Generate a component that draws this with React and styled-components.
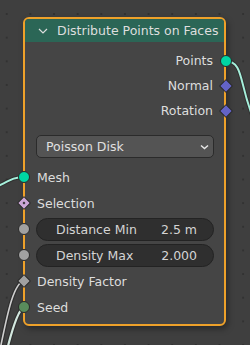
import React from 'react';
import styled, { createGlobalStyle } from 'styled-components';

const GlobalStyle = createGlobalStyle`
  html, body {
    margin: 0;
    padding: 0;
    background: #3f3f3f;
  }
`;

// socket kinds found on the node
const socketColors = {
  geometry: '#00d6a3',
  vector: '#6363c7',
  bool: '#cca6d6',
  float: '#a1a1a1',
  int: '#598c5c',
};

const outputs = [
  { label: 'Points', kind: 'geometry', shape: 'circle' },
  { label: 'Normal', kind: 'vector', shape: 'diamond' },
  { label: 'Rotation', kind: 'vector', shape: 'diamond' },
];

const inputs = [
  { label: 'Mesh', kind: 'geometry', shape: 'circle' },
  { label: 'Selection', kind: 'bool', shape: 'diamond', dot: true },
  { label: 'Distance Min', kind: 'float', shape: 'circle', value: '2.5 m' },
  { label: 'Density Max', kind: 'float', shape: 'circle', value: '2.000' },
  { label: 'Density Factor', kind: 'float', shape: 'diamond' },
  { label: 'Seed', kind: 'int', shape: 'circle' },
];

const App = () => {
  return (
    <>
      <GlobalStyle />
      <Canvas>
        <Wires width="250" height="345" viewBox="0 0 250 345">
          {/* Points -> off screen */}
          <path d="M225 61 C245 61, 238 85, 256 125" stroke="#262626" strokeWidth="4" fill="none" opacity="0.6" />
          <path d="M225 61 C245 61, 238 85, 256 125" stroke="#a6f0dc" strokeWidth="2" fill="none" />
          {/* off screen -> Mesh */}
          <path d="M24 177 C12 177, 8 182, -10 190" stroke="#262626" strokeWidth="4" fill="none" opacity="0.6" />
          <path d="M24 177 C12 177, 8 182, -10 190" stroke="#a6f0dc" strokeWidth="2" fill="none" />
          {/* Density Factor */}
          <path d="M24 281 C14 283, 8 310, 0 350" stroke="#262626" strokeWidth="4" fill="none" opacity="0.6" />
          <path d="M24 281 C14 283, 8 310, 0 350" stroke="#cfcfcf" strokeWidth="1.6" fill="none" />
          {/* Seed */}
          <path d="M24 307 C18 310, 12 330, 7 350" stroke="#262626" strokeWidth="4.5" fill="none" opacity="0.6" />
          <path d="M24 307 C18 310, 12 330, 7 350" stroke="#d3e8df" strokeWidth="2.2" fill="none" />
        </Wires>

        <Node>
          <Header>
            <svg width="10" height="6" viewBox="0 0 10 6">
              <polyline points="1,1 5,5 9,1" stroke="#dcdcdc" strokeWidth="1.2" fill="none" />
            </svg>
            <Title>Distribute Points on Faces</Title>
          </Header>

          <Body>
            <Outputs>
              {outputs.map((s) => (
                <OutRow key={s.label}>
                  <Label>{s.label}</Label>
                  <Socket $side="right" $shape={s.shape} $color={socketColors[s.kind]} />
                </OutRow>
              ))}
            </Outputs>

            <Dropdown>
              <span>Poisson Disk</span>
              <svg width="9" height="6" viewBox="0 0 9 6">
                <polyline points="1,1.5 4.5,4.5 8,1.5" stroke="#e6e6e6" strokeWidth="1.5" fill="none" />
              </svg>
            </Dropdown>

            <Inputs>
              {inputs.map((s) => (
                <InRow key={s.label}>
                  <Socket $side="left" $shape={s.shape} $color={socketColors[s.kind]}>
                    {s.dot && <SocketDot />}
                  </Socket>
                  {s.value ? (
                    <Field>
                      <span>{s.label}</span>
                      <span>{s.value}</span>
                    </Field>
                  ) : (
                    <Label>{s.label}</Label>
                  )}
                </InRow>
              ))}
            </Inputs>
          </Body>
        </Node>
      </Canvas>
    </>
  );
};

const Canvas = styled.div`
  position: relative;
  width: 250px;
  height: 345px;
  overflow: hidden;
  box-sizing: border-box;
  padding: 17px 0 0 23px;
  background-color: #3f3f3f;
  background-image: radial-gradient(circle, #323232 1px, transparent 1.3px);
  background-size: 23.65px 23.65px;
  background-position: -5.1px 2.2px;
  font-family: 'DejaVu Sans', sans-serif;
  font-size: 12.5px;
  color: #dddddd;
`;

const Wires = styled.svg`
  position: absolute;
  left: 0;
  top: 0;
  z-index: 0;
`;

const Node = styled.div`
  position: relative;
  z-index: 1;
  width: 203px;
  box-sizing: border-box;
  border: 2px solid #eea12a;
  border-radius: 6px;
  background: #454545;
  box-shadow: 2px 3px 6px rgba(0, 0, 0, 0.35);
`;

const Header = styled.div`
  height: 23px;
  display: flex;
  align-items: center;
  gap: 9px;
  padding-left: 13px;
  background: #2b6656;
  border-radius: 4px 4px 0 0;
`;

const Title = styled.span`
  color: #dedede;
  white-space: nowrap;
`;

const Body = styled.div`
  padding: 6px 0 4px;
`;

const Outputs = styled.div`
  display: flex;
  flex-direction: column;
`;

const OutRow = styled.div`
  position: relative;
  height: 25px;
  display: flex;
  align-items: center;
  justify-content: flex-end;
  padding-right: 11px;
`;

const Label = styled.span`
  white-space: nowrap;
`;

const Socket = styled.span`
  position: absolute;
  top: 50%;
  box-sizing: border-box;
  ${(p) => (p.$side === 'left' ? 'left: -1px;' : 'right: -1.5px;')}
  width: ${(p) => (p.$shape === 'diamond' ? '10px' : '12px')};
  height: ${(p) => (p.$shape === 'diamond' ? '10px' : '12px')};
  margin-top: ${(p) => (p.$shape === 'diamond' ? '-5px' : '-6px')};
  transform: translateX(${(p) => (p.$side === 'left' ? '-50%' : '50%')})
    ${(p) => (p.$shape === 'diamond' ? 'rotate(45deg)' : '')};
  border-radius: ${(p) => (p.$shape === 'diamond' ? '1px' : '50%')};
  background: ${(p) => p.$color};
  border: 1px solid #2a2a2a;
  display: flex;
  align-items: center;
  justify-content: center;
`;

const SocketDot = styled.span`
  width: 2px;
  height: 2px;
  background: #2a2a2a;
`;

const Dropdown = styled.div`
  margin: 12px 10px 0 11px;
  height: 23px;
  box-sizing: border-box;
  display: flex;
  align-items: center;
  justify-content: space-between;
  padding: 0 4px 0 9px;
  background: #545454;
  border: 1px solid #2b2b2b;
  border-radius: 5px;
  color: #e0e0e0;
`;

const Inputs = styled.div`
  margin-top: 6px;
  display: flex;
  flex-direction: column;
`;

const InRow = styled.div`
  position: relative;
  height: 26px;
  display: flex;
  align-items: center;
  padding-left: 12px;
  padding-right: 10px;
`;

const Field = styled.div`
  flex: 1;
  height: 23px;
  margin-left: -1px;
  box-sizing: border-box;
  display: flex;
  align-items: center;
  justify-content: space-between;
  padding: 0 16px 0 19px;
  background: #2f2f2f;
  border: 1px solid #232323;
  border-radius: 12px;
  color: #d4d4d4;
`;

export default App;
